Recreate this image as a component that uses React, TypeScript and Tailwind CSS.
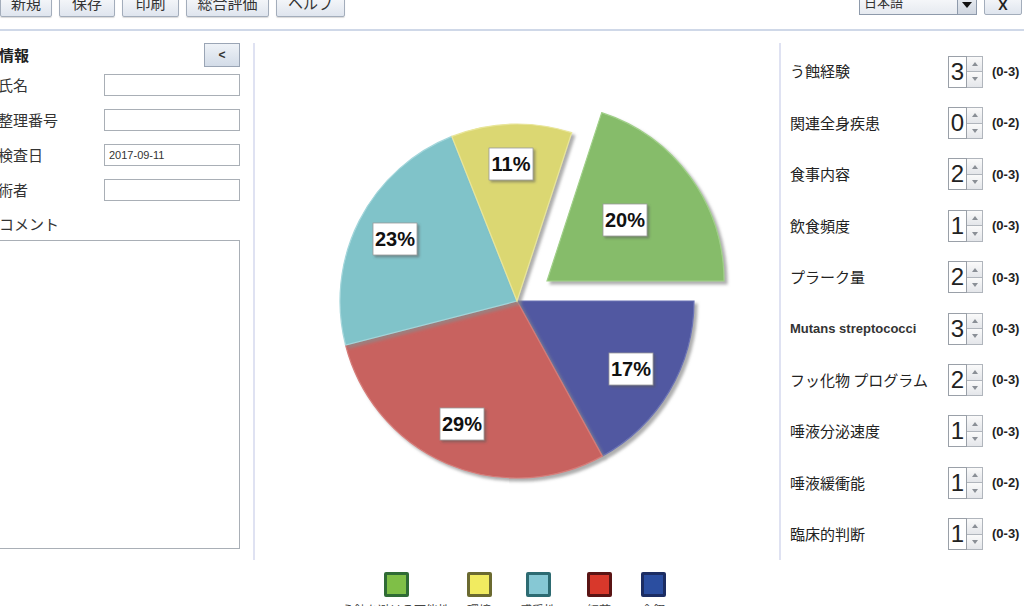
import React from "react";

type Slice = { p: number; c: string; edge: string; label: string; lx: number; ly: number; explode?: boolean };

const slices: Slice[] = [
  { p: 17, c: "#5159a1", edge: "#6a72b5", label: "17%", lx: 376, ly: 338 },
  { p: 29, c: "#c8625f", edge: "#d67b78", label: "29%", lx: 207, ly: 393 },
  { p: 23, c: "#80c3c9", edge: "#a3d6db", label: "23%", lx: 140, ly: 208 },
  { p: 11, c: "#dbd772", edge: "#e9e69a", label: "11%", lx: 256, ly: 133 },
  { p: 20, c: "#86bc6b", edge: "#a0d088", label: "20%", lx: 370, ly: 189, explode: true },
];

function Pie() {
  const cx = 262;
  const cy = 270;
  const r = 177;
  let a = 0;
  const paths = slices.map((s, i) => {
    const a0 = a;
    const a1 = a + (s.p / 100) * Math.PI * 2;
    a = a1;
    const x0 = cx + r * Math.cos(a0);
    const y0 = cy + r * Math.sin(a0);
    const x1 = cx + r * Math.cos(a1);
    const y1 = cy + r * Math.sin(a1);
    const large = a1 - a0 > Math.PI ? 1 : 0;
    const d = `M ${cx} ${cy} L ${x0} ${y0} A ${r} ${r} 0 ${large} 1 ${x1} ${y1} Z`;
    const t = s.explode ? "translate(30,-20)" : undefined;
    return (
      <path key={i} d={d} fill={s.c} stroke={s.edge} strokeWidth={1.2} transform={t} filter="url(#sh)" />
    );
  });
  return (
    <svg width="524" height="541" viewBox="0 0 524 541" className="block shrink-0">
      <defs>
        <filter id="sh" x="-20%" y="-20%" width="140%" height="140%">
          <feDropShadow dx="3" dy="3" stdDeviation="1.5" floodColor="#8a8a8a" floodOpacity="0.7" />
        </filter>
        <filter id="sh2" x="-20%" y="-20%" width="140%" height="140%">
          <feDropShadow dx="2" dy="2" stdDeviation="1" floodColor="#555" floodOpacity="0.5" />
        </filter>
      </defs>
      {paths}
      {slices.map((s, i) => (
        <g key={i}>
          <rect x={s.lx - 22} y={s.ly - 16} width={44} height={32} fill="#fff" stroke="#9a9a9a" strokeWidth={0.8} filter="url(#sh2)" />
          <text
            x={s.lx}
            y={s.ly + 7}
            textAnchor="middle"
            fontFamily="'Liberation Sans', Arial, sans-serif"
            fontWeight="bold"
            fontSize="20"
            fill="#111"
          >
            {s.label}
          </text>
        </g>
      ))}
    </svg>
  );
}

function ToolBtn({ label, w, first }: { label: string; w: string; first?: boolean }) {
  return (
    <div
      className={`${w} ${first ? "" : "ml-[7px]"} h-[28px] -mt-[11px] flex items-center justify-center border border-[#a3adbb] rounded-[2px] bg-gradient-to-b from-[#ffffff] to-[#dfe5ee] text-[15px] text-[#333] shadow-[0_1px_1px_rgba(0,0,0,0.15)]`}
    >
      {label}
    </div>
  );
}

function Spinner({ v, label, range, mutans }: { v: string; label: string; range: string; mutans?: boolean }) {
  return (
    <div className="h-[51.4px] flex items-center shrink-0">
      <div
        className={`w-[158px] ${
          mutans
            ? "font-['Liberation_Sans',Arial,sans-serif] font-bold text-[13px] text-[#333]"
            : "text-[15px] text-[#222]"
        } whitespace-nowrap`}
      >
        {label}
      </div>
      <div className="flex h-[32px]">
        <div className="w-[19px] h-full border border-[#9aa0a8] bg-white flex items-center justify-center font-['Liberation_Sans',Arial,sans-serif] text-[24px] leading-none text-[#222]">
          {v}
        </div>
        <div className="w-[16px] h-full flex flex-col border border-l-0 border-[#b0b5bc]">
          <div className="flex-1 border-b border-[#b0b5bc] bg-gradient-to-b from-[#fafafa] to-[#e4e6ea] flex items-center justify-center">
            <div className="w-0 h-0 border-l-[3px] border-r-[3px] border-b-[4px] border-l-transparent border-r-transparent border-b-[#8a8f96]" />
          </div>
          <div className="flex-1 bg-gradient-to-b from-[#fafafa] to-[#e4e6ea] flex items-center justify-center">
            <div className="w-0 h-0 border-l-[3px] border-r-[3px] border-t-[4px] border-l-transparent border-r-transparent border-t-[#8a8f96]" />
          </div>
        </div>
      </div>
      <div className="ml-[9px] font-['Liberation_Sans',Arial,sans-serif] font-bold text-[13px] text-[#222]">{range}</div>
    </div>
  );
}

const legend = [
  { w: "w-[90px]", fill: "bg-[#7fbf47]", border: "border-[#2f6b35]", label: "う蝕を避ける可能性" },
  { w: "w-[76px]", fill: "bg-[#f1eb60]", border: "border-[#6b6a30]", label: "環境" },
  { w: "w-[42px]", fill: "bg-[#86c8d4]", border: "border-[#2d6b72]", label: "感受性" },
  { w: "w-[80px]", fill: "bg-[#d8382b]", border: "border-[#5a1414]", label: "細菌" },
  { w: "w-[28px]", fill: "bg-[#2b4ea0]", border: "border-[#1c2d63]", label: "食餌" },
];

export default function App() {
  const rows = [
    { label: "う蝕経験", v: "3", r: "(0-3)" },
    { label: "関連全身疾患", v: "0", r: "(0-2)" },
    { label: "食事内容", v: "2", r: "(0-3)" },
    { label: "飲食頻度", v: "1", r: "(0-3)" },
    { label: "プラーク量", v: "2", r: "(0-3)" },
    { label: "Mutans streptococci", v: "3", r: "(0-3)", mutans: true },
    { label: "フッ化物 プログラム", v: "2", r: "(0-3)" },
    { label: "唾液分泌速度", v: "1", r: "(0-3)" },
    { label: "唾液緩衝能", v: "1", r: "(0-2)" },
    { label: "臨床的判断", v: "1", r: "(0-3)" },
  ];
  return (
    <div className="w-[1024px] h-[606px] overflow-hidden bg-white font-['Noto_Sans_CJK_JP','Liberation_Sans',sans-serif] text-[#222]">
      {/* toolbar */}
      <div className="h-[31px] flex items-start justify-between border-b-2 border-[#cfd8e8] overflow-hidden">
        <div className="flex items-start">
          <ToolBtn label="新規" w="w-[52px]" first />
          <ToolBtn label="保存" w="w-[56px]" />
          <ToolBtn label="印刷" w="w-[57px]" />
          <ToolBtn label="総合評価" w="w-[83px]" />
          <ToolBtn label="ヘルプ" w="w-[69px]" />
        </div>
        <div className="flex items-start mr-[2px]">
          <div className="w-[118px] h-[26px] -mt-[11px] flex border border-[#8e9aab] bg-gradient-to-b from-[#ffffff] to-[#e6eaf0]">
            <div className="flex-1 pl-[4px] flex items-center text-[13px] text-[#333]">日本語</div>
            <div className="w-[19px] border-l border-[#8e9aab] bg-gradient-to-b from-[#f4f6f9] to-[#cfd6e0] flex items-center justify-center">
              <div className="w-0 h-0 mt-[6px] border-l-[5px] border-r-[5px] border-t-[6px] border-l-transparent border-r-transparent border-t-[#111]" />
            </div>
          </div>
          <div className="ml-[7px] w-[38px] h-[26px] -mt-[11px] flex items-center justify-center border border-[#a3adbb] rounded-[2px] bg-gradient-to-b from-[#ffffff] to-[#dfe5ee] font-['Liberation_Sans',Arial,sans-serif] font-bold text-[14px] pt-[6px]">
            X
          </div>
        </div>
      </div>

      {/* body */}
      <div className="flex h-[575px] overflow-hidden">
        {/* left panel */}
        <div className="w-[253px] shrink-0 pr-[13px] pt-[12px] flex flex-col">
          <div className="h-[24px] flex items-center justify-between">
            <div className="text-[15px] font-bold -ml-[1px]">情報</div>
            <div className="w-[36px] h-[24px] flex items-center justify-center border border-[#9aa5b5] bg-gradient-to-b from-[#eef2f7] to-[#d3dce8] font-['Liberation_Sans',Arial,sans-serif] font-bold text-[12px] text-[#333]">
              &lt;
            </div>
          </div>
          <div className="mt-[7px] flex flex-col gap-[13px]">
            {[
              { l: "氏名", v: "" },
              { l: "整理番号", v: "" },
              { l: "検査日", v: "2017-09-11" },
              { l: "術者", v: "" },
            ].map((f) => (
              <div key={f.l} className="h-[22px] flex items-center justify-between">
                <div className="text-[15px] -ml-[2px] text-[#333]">{f.l}</div>
                <div className="w-[136px] h-[22px] border border-[#a9afb6] bg-white px-[4px] flex items-center font-['Liberation_Sans',Arial,sans-serif] text-[11px] text-[#333]">
                  {f.v}
                </div>
              </div>
            ))}
          </div>
          <div className="mt-[12px] h-[22px] flex items-center text-[15px] -ml-[1px] text-[#333]">コメント</div>
          <div className="mt-[5px] -ml-[4px] h-[309px] border border-[#a9afb6] bg-white" />
        </div>
        <div className="mt-[12px] w-[2px] h-[517px] shrink-0 bg-[#dfe2f2]" />

        {/* center */}
        <div className="w-[524px] shrink-0 flex flex-col">
          <Pie />
          <div className="flex pl-[96px] shrink-0">
            {legend.map((l, i) => (
              <div key={i} className={`${l.w} flex flex-col items-center`}>
                <div className={`w-[25px] h-[25px] border-[3px] rounded-[2px] ${l.border} ${l.fill}`} />
                <div className="mt-[4px] text-[12px] text-[#444] whitespace-nowrap">{l.label}</div>
              </div>
            ))}
          </div>
        </div>
        <div className="mt-[12px] w-[2px] h-[517px] shrink-0 bg-[#dfe2f2]" />

        {/* right */}
        <div className="flex-1 pl-[9px] pt-[15px] flex flex-col">
          {rows.map((r) => (
            <Spinner key={r.label} v={r.v} label={r.label} range={r.r} mutans={r.mutans} />
          ))}
        </div>
      </div>
    </div>
  );
}
